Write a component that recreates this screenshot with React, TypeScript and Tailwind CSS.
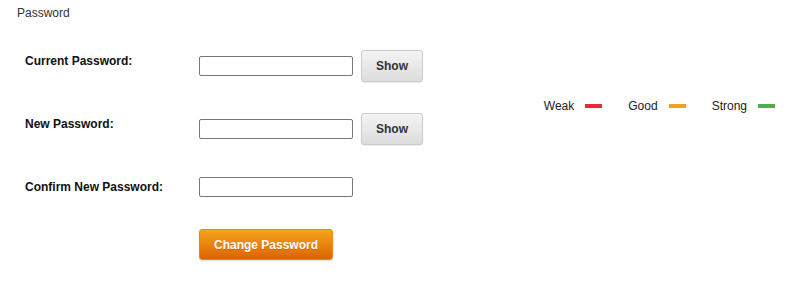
export default function App() {
  return (
    <div className="relative h-[281px] w-[797px] bg-white font-['Liberation_Sans',Arial,sans-serif] text-[12px] text-[#333]">
      <div className="pl-[17px] pt-[5px] leading-[16px]">Password</div>

      <div className="flex items-start">
        <form className="pl-[25px] pt-[29px]">
          {/* current */}
          <div className="flex h-[32px] items-start">
            <label className="w-[174px] pt-[4px] font-bold leading-[14px] text-[#111]">Current Password:</label>
            <input type="password" className="mt-[6px] h-[20px] w-[154px] rounded-[2px] border border-[#767676] outline-none" />
            <button type="button" className="ml-[8px] h-[32px] w-[62px] rounded-[3px] border border-[#cbcbcb] bg-gradient-to-b from-[#f4f4f4] to-[#dcdcdc] font-bold text-[#333] shadow-[0_1px_1px_rgba(0,0,0,0.08)]">
              Show
            </button>
          </div>

          {/* new */}
          <div className="mt-[31px] flex h-[32px] items-start">
            <label className="w-[174px] pt-[4px] font-bold leading-[14px] text-[#111]">New Password:</label>
            <input type="password" className="mt-[6px] h-[20px] w-[154px] rounded-[2px] border border-[#767676] outline-none" />
            <button type="button" className="ml-[8px] h-[32px] w-[62px] rounded-[3px] border border-[#cbcbcb] bg-gradient-to-b from-[#f4f4f4] to-[#dcdcdc] font-bold text-[#333] shadow-[0_1px_1px_rgba(0,0,0,0.08)]">
              Show
            </button>
          </div>

          {/* confirm */}
          <div className="mt-[32px] flex h-[20px] items-start">
            <label className="w-[174px] pt-[3px] font-bold leading-[14px] text-[#111]">Confirm New Password:</label>
            <input type="password" className="h-[20px] w-[154px] rounded-[2px] border border-[#767676] outline-none" />
          </div>

          <div className="mt-[32px] pl-[174px]">
            <button type="button" className="h-[31px] w-[134px] rounded-[3px] border border-[#e38a12] bg-gradient-to-b from-[#f6a41d] to-[#dc6200] font-bold text-white [text-shadow:0_1px_0_rgba(0,0,0,0.15)] shadow-[0_1px_2px_rgba(0,0,0,0.15)]">
              Change Password
            </button>
          </div>
        </form>

        <div className="ml-auto mr-[22px] mt-[78px] flex items-center leading-[14px] text-[#222]">
          <span>Weak</span>
          <span className="ml-[11px] h-[4px] w-[17px] bg-[#e8283b]" />
          <span className="ml-[26px]">Good</span>
          <span className="ml-[11px] h-[4px] w-[17px] bg-[#f5a11c]" />
          <span className="ml-[26px]">Strong</span>
          <span className="ml-[11px] h-[4px] w-[17px] bg-[#4cae4c]" />
        </div>
      </div>
    </div>
  )
}
